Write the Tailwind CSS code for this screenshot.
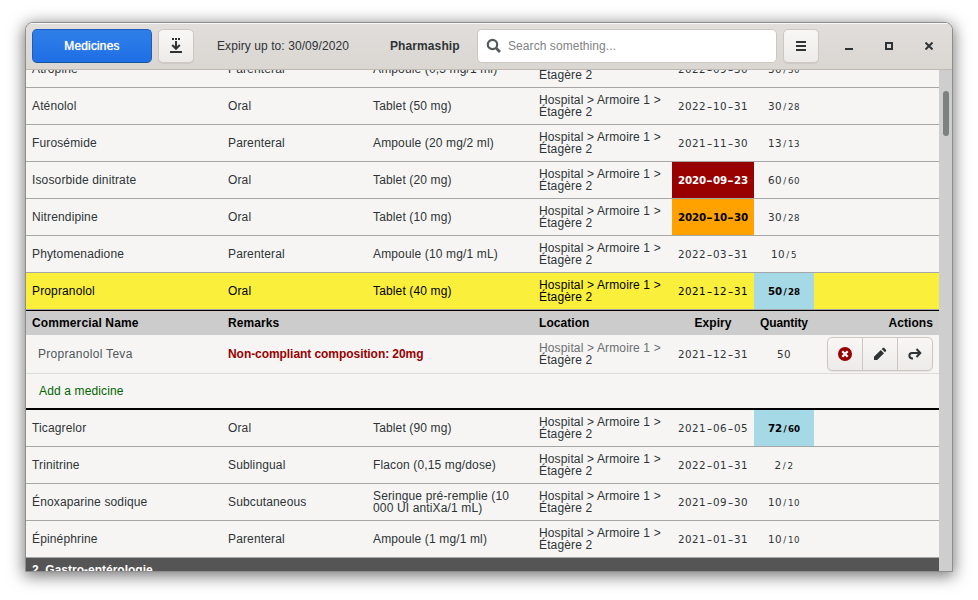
<!DOCTYPE html>
<html lang="en">
<head>
<meta charset="utf-8">
<title>Pharmaship</title>
<script src="https://cdn.jsdelivr.net/npm/@tailwindcss/browser@4"></script>
</head>
<body class="flex h-[600px] w-[978px] overflow-hidden bg-white pt-[22px] pl-[25px] font-['Liberation_Sans',sans-serif] text-[12px] leading-[12px] tracking-[0.14px] text-[#2e3436]">
<div class="flex h-[550px] w-[928px] flex-col overflow-hidden rounded-t-lg border border-[#8f8e8c] bg-[#f6f5f4] shadow-[0_3px_16px_1px_rgba(0,0,0,0.55)]">
  <header class="flex h-[47px] shrink-0 items-center border-b border-[#bfb8b1] bg-linear-to-b from-[#e1dedb] to-[#dad6d2] pl-[6px] shadow-[inset_0_1px_#f9f8f7]">
    <button class="h-[34px] w-[120px] rounded-[5px] border border-[#1b5cbe] border-b-[#15539e] bg-linear-to-b from-[#2f7fe9] to-[#1f6fe5] pb-px font-normal text-white [text-shadow:0_0_1px_#fff]">Medicines</button>
    <button class="ml-[6px] flex h-[34px] w-[36px] items-center justify-center rounded-[5px] border border-[#cdc7c2] bg-linear-to-b from-[#f8f7f6] to-[#edebe9] shadow-[0_1px_1px_rgba(0,0,0,0.07)]">
      <svg width="16" height="16" viewBox="0 0 16 16" fill="none" stroke="#2e3436" stroke-width="2"><path d="M2 14h12"/><path d="M8 3v7M4.200 7 8 10.800l3.800-3.800"/><path d="M4 1h2M7 1h2M10 1h2" stroke-width="1.800"/></svg>
    </button>
    <span class="ml-[23px] w-[173px] tracking-[0.08px]">Expiry up to: 30/09/2020</span>
    <span class="w-[87px] font-bold tracking-[0.1px]">Pharmaship</span>
    <div class="flex h-[34px] w-[300px] items-center rounded-[5px] border border-[#cdc7c2] bg-white pl-[8px] tracking-[0.07px] text-[#7f8384]">
      <svg class="mr-[6px]" width="16" height="16" viewBox="0 0 16 16" fill="none" stroke="#555b5d"><circle cx="6.500" cy="6.500" r="4.700" stroke-width="2.200"/><path d="m10 10 4 4" stroke-width="2.700"/></svg>
      <span>Search something...</span>
    </div>
    <button class="ml-[6px] flex h-[34px] w-[36px] items-center justify-center rounded-[5px] border border-[#cdc7c2] bg-linear-to-b from-[#f8f7f6] to-[#edebe9] shadow-[0_1px_1px_rgba(0,0,0,0.07)]">
      <svg width="10" height="10" viewBox="0 0 10 10" fill="#2e3436"><path d="M0 0h10v2H0zM0 4h10v2H0zM0 8h10v2H0z"/></svg>
    </button>
    <svg class="ml-[26px]" width="8" height="8" viewBox="0 0 8 8" fill="#2e3436"><path d="M0 6h8v2H0z"/></svg>
    <svg class="ml-[32px]" width="8" height="8" viewBox="0 0 8 8" fill="none" stroke="#2e3436" stroke-width="2"><path d="M1 1h6v6H1z"/></svg>
    <svg class="ml-[32px]" width="8" height="8" viewBox="0 0 8 8" fill="none" stroke="#2e3436" stroke-width="2"><path d="m.5.5 7 7M7.500.5l-7 7"/></svg>
  </header>
  <div class="flex min-h-0 flex-1">
    <main id="list" class="w-[913px] overflow-hidden"></main>
    <div class="w-[13px] bg-[#cecece] pt-[21px] pl-[4px]"><div class="h-[45px] w-[6px] rounded-full bg-[#7e8182]"></div></div>
  </div>
</div>
<template id="detail">
  <section class="border-t border-b-2 border-black">
    <div class="grid h-[24px] grid-cols-[196px_145px_166px_139px_82px_60px_125px] items-center bg-[#cccccc] font-bold tracking-[0.06px] text-black">
      <span class="pl-[6px] tracking-[0.12px]">Commercial Name</span><span class="pl-[6px]">Remarks</span><span></span><span class="pl-[6px]">Location</span><span class="text-center">Expiry</span><span class="text-center tracking-[-0.1px]">Quantity</span><span class="pr-[6px] text-right">Actions</span>
    </div>
    <div class="grid h-[39px] grid-cols-[196px_311px_139px_82px_60px_125px] items-center border-b border-[#dcdcda]">
      <span class="pl-[12px] tracking-[0.3px] text-[#50565a]">Propranolol Teva</span><span class="pl-[6px] font-bold tracking-[-0.06px] text-[#990000]">Non-compliant composition: 20mg</span>
      <span class="pl-[6px] first-line:text-[#6b6f70]">Hospital &gt; Armoire 1 &gt;<br>Étagère 2</span>
      <span class="text-center font-['DejaVu_Sans',sans-serif] text-[10.3px] tracking-[0.45px]">2021<span class="inline-block w-[7px] scale-x-150 text-center tracking-normal">-</span>12<span class="inline-block w-[7px] scale-x-150 text-center tracking-normal">-</span>31</span>
      <span class="text-center font-['DejaVu_Sans',sans-serif] text-[10.3px] tracking-[0.45px]">50</span>
      <div class="ml-[13px] flex h-[34px] w-[106px] divide-x divide-[#cdc7c2] rounded-[5px] border border-[#cdc7c2] bg-linear-to-b from-[#f8f7f6] to-[#edebe9] shadow-[0_1px_1px_rgba(0,0,0,0.07)]">
        <button class="flex w-[35px] items-center justify-center"><svg width="14" height="14" viewBox="0 0 14 14"><circle cx="7" cy="7" r="7" fill="#990000"/><path d="m4.300 4.300 5.400 5.400M9.700 4.300 4.300 9.700" stroke="#fff" stroke-width="2.300"/></svg></button>
        <button class="flex w-[35px] items-center justify-center"><svg width="14" height="14" viewBox="0 0 14 14" fill="#2e3436"><path d="M1 13v-3.200l6.800-6.800L11 6.200 4.200 13zM8.700 2.100l1-1c.5-.5 1.100-.5 1.600 0l1.600 1.600c.5.5.5 1.100 0 1.600l-1 1z"/></svg></button>
        <button class="flex w-[34px] items-center justify-center"><svg width="14" height="14" viewBox="0 0 14 14" fill="none" stroke="#2e3436" stroke-width="2"><path d="M5 11.500H4C.5 11 .5 6 4 6H12M8.500 2 12.300 6 8.500 10"/></svg></button>
      </div>
    </div>
    <div class="flex h-[34px] items-center pl-[13px] text-[#006400]">Add a medicine</div>
  </section>
</template>
<script>
const rows = [
  ["Atropine","Parenteral","Ampoule (0,5 mg/1 ml)","2022-09-30","30","30"],
  ["Aténolol","Oral","Tablet (50 mg)","2022-10-31","30","28"],
  ["Furosémide","Parenteral","Ampoule (20 mg/2 ml)","2021-11-30","13","13"],
  ["Isosorbide dinitrate","Oral","Tablet (20 mg)","2020-09-23","60","60","bg-[#990000] text-white font-bold tracking-[-0.17px]"],
  ["Nitrendipine","Oral","Tablet (10 mg)","2020-10-30","30","28","bg-[#ffa200] text-black font-bold tracking-[-0.17px]"],
  ["Phytomenadione","Parenteral","Ampoule (10 mg/1 mL)","2022-03-31","10","5"],
  ["Propranolol","Oral","Tablet (40 mg)","2021-12-31","50","28","","bg-[#a5d9e6] text-black font-bold tracking-[-0.12px]","bg-[#faf03c] text-black"],
  null,
  ["Ticagrelor","Oral","Tablet (90 mg)","2021-06-05","72","60","","bg-[#a5d9e6] text-black font-bold tracking-[-0.12px]"],
  ["Trinitrine","Sublingual","Flacon (0,15 mg/dose)","2022-01-31","2","2"],
  ["Énoxaparine sodique","Subcutaneous","Seringue pré-remplie (10<br>000 UI antiXa/1 mL)","2021-09-30","10","10"],
  ["Épinéphrine","Parenteral","Ampoule (1 mg/1 ml)","2021-01-31","10","10"]
];
const dash = `<span class="inline-block w-[7px] scale-x-150 text-center tracking-normal">-</span>`;
document.getElementById("list").innerHTML = rows.map((r, i) => r ? `<div class="grid h-[37px] grid-cols-[196px_145px_166px_139px_82px_60px_1fr] items-center border-b border-[#a6a6a6] ${i ? "" : "-mt-[19px]"} ${r[8] || ""}">
  <span class="pl-[6px]">${r[0]}</span><span class="pl-[6px]">${r[1]}</span><span class="pl-[6px]">${r[2]}</span><span class="pl-[6px]">Hospital &gt; Armoire 1 &gt;<br>Étagère 2</span>
  <span class="flex h-full items-center justify-center font-['DejaVu_Sans',sans-serif] text-[10.3px] ${r[6] || "tracking-[0.45px]"}"><span>${r[3].replaceAll("-", dash)}</span></span>
  <span class="flex h-full items-center justify-center font-['DejaVu_Sans',sans-serif] text-[10.3px] ${r[7] || "tracking-[0.45px]"}"><span>${r[4]}<span class="text-[8.7px]"><span class="inline-block w-[6px] text-center">/</span>${r[5]}</span></span></span></div>` : document.getElementById("detail").innerHTML).join("")
  + `<div class="h-[25px] bg-[#555555] pt-[6px] pl-[6px] font-bold tracking-normal text-white">2. Gastro-entérologie</div>`;
</script>
</body>
</html>
